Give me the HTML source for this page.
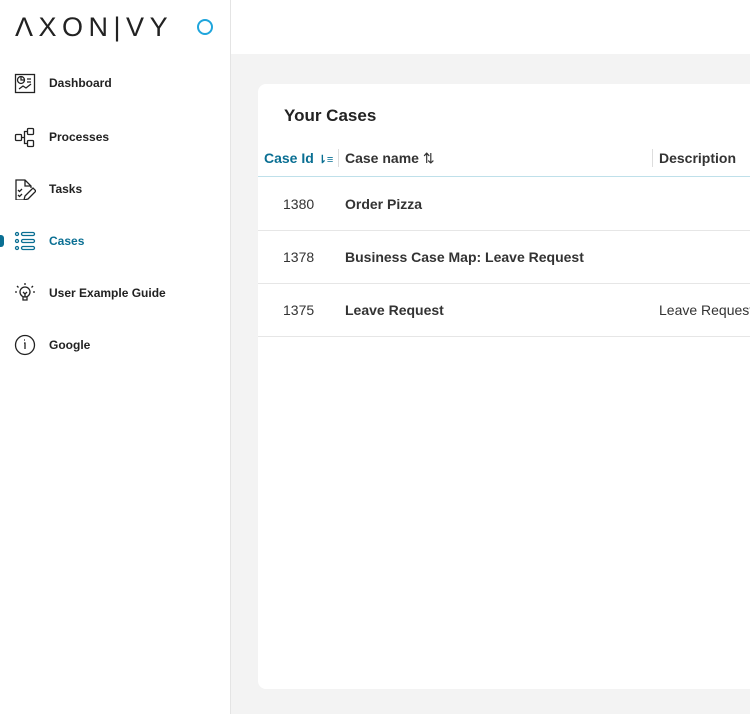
<!DOCTYPE html>
<html><head><style>
*{margin:0;padding:0;box-sizing:border-box}
body{width:750px;height:714px;overflow:hidden;font-family:"Liberation Sans",sans-serif;background:#f3f3f3;position:relative}
.side{position:absolute;left:0;top:0;width:231px;height:714px;background:#fff;border-right:1px solid #e4e4e4}
.top{position:absolute;left:231px;top:0;width:519px;height:54px;background:#fff}
.logo{position:absolute;left:15px;top:12px;font-size:27px;letter-spacing:5.5px;color:#222;font-weight:300}
.dot{position:absolute;left:197px;top:19px;width:16px;height:16px;border:2px solid #1fa5dc;border-radius:50%}
.item{position:absolute;left:0;width:230px;height:30px;font-size:12px;font-weight:bold;color:#222}
.item svg{position:absolute;left:14px;top:4px}
.item span{position:absolute;left:49px;top:8px}
.act{color:#0a6f93}
.bar{position:absolute;left:0;top:9px;width:4px;height:12px;background:#0a6f93;border-radius:0 3px 3px 0}
.card{position:absolute;left:258px;top:84px;width:500px;height:605px;background:#fff;border-radius:8px}
h2{position:absolute;left:26px;top:22px;font-size:17px;font-weight:bold;color:#222}
.th{position:absolute;top:66px;font-size:14px;font-weight:bold;color:#333}
.sep{position:absolute;top:65px;width:1px;height:18px;background:#ddd}
.line{position:absolute;left:0;width:500px;height:1px;background:#e6e6e6}
.td{position:absolute;font-size:14px;color:#333}
</style></head><body>
<div class="side">
<div class="logo">ΛXON|VY</div><div class="dot"></div>
<div class="item" style="top:68px"><svg width="22" height="22" fill="none" stroke="#222" stroke-width="1.3"><rect x="1.5" y="2.5" width="19" height="18"/><circle cx="7" cy="8" r="3.5"/><path d="M7 5v3h3M13 7h4M13 10h4M5 17l4-3 3 2 5-4"/></svg><span>Dashboard</span></div>
<div class="item" style="top:122px"><svg width="22" height="22" fill="none" stroke="#222" stroke-width="1.3"><rect x="1.5" y="8.5" width="6" height="6" rx="1"/><rect x="13.5" y="2.5" width="6" height="6" rx="1"/><rect x="13.5" y="14.5" width="6" height="6" rx="1"/><path d="M7.5 11.5h3v-6h3M10.5 11.5v6h3"/></svg><span>Processes</span></div>
<div class="item" style="top:174px"><svg width="22" height="22" fill="none" stroke="#222" stroke-width="1.3"><path d="M11 22H2V2h9l6 6v2M11 2v6h6M4 12l1.5 1.5L8 11M4 17l1.5 1.5L8 16M10 22l1-4 8-8 3 3-8 8z"/></svg><span>Tasks</span></div>
<div class="item act" style="top:226px"><div class="bar"></div><svg width="22" height="22" fill="none" stroke="#0a6f93" stroke-width="1.3"><circle cx="3" cy="4" r="1.5"/><circle cx="3" cy="11" r="1.5"/><circle cx="3" cy="18" r="1.5"/><rect x="7.5" y="2.5" width="13" height="3" rx="1.5"/><rect x="7.5" y="9.5" width="13" height="3" rx="1.5"/><rect x="7.5" y="16.5" width="13" height="3" rx="1.5"/></svg><span>Cases</span></div>
<div class="item" style="top:278px"><svg width="22" height="22" fill="none" stroke="#222" stroke-width="1.3"><circle cx="11" cy="10" r="5"/><path d="M9 15v3h4v-3M9 10l2 2 2-2M11 12v3M11 1v2M3 4l1.5 1.5M19 4l-1.5 1.5M1 10h2M19 10h2"/></svg><span>User Example Guide</span></div>
<div class="item" style="top:330px"><svg width="22" height="22" fill="none" stroke="#222" stroke-width="1.3"><circle cx="11" cy="11" r="9.5"/><path d="M10 9h1v6M10 6h1"/></svg><span>Google</span></div>
</div>
<div class="top"></div>
<div class="card">
<h2>Your Cases</h2>
<div class="th" style="left:6px;color:#0a6f93">Case Id <span style="font-size:11px">⇂≡</span></div>
<div class="sep" style="left:80px"></div>
<div class="th" style="left:87px">Case name <span style="font-weight:normal">⇅</span></div>
<div class="sep" style="left:394px"></div>
<div class="th" style="left:401px">Description</div>
<div class="line" style="top:92px;background:#bfe0ea"></div>
<div class="td" style="left:25px;top:112px">1380</div><div class="td" style="left:87px;top:112px;font-weight:bold">Order Pizza</div>
<div class="line" style="top:146px"></div>
<div class="td" style="left:25px;top:165px">1378</div><div class="td" style="left:87px;top:165px;font-weight:bold">Business Case Map: Leave Request</div>
<div class="line" style="top:199px"></div>
<div class="td" style="left:25px;top:218px">1375</div><div class="td" style="left:87px;top:218px;font-weight:bold">Leave Request</div><div class="td" style="left:401px;top:218px;white-space:nowrap">Leave Request</div>
<div class="line" style="top:252px"></div>
</div>
</body></html>
